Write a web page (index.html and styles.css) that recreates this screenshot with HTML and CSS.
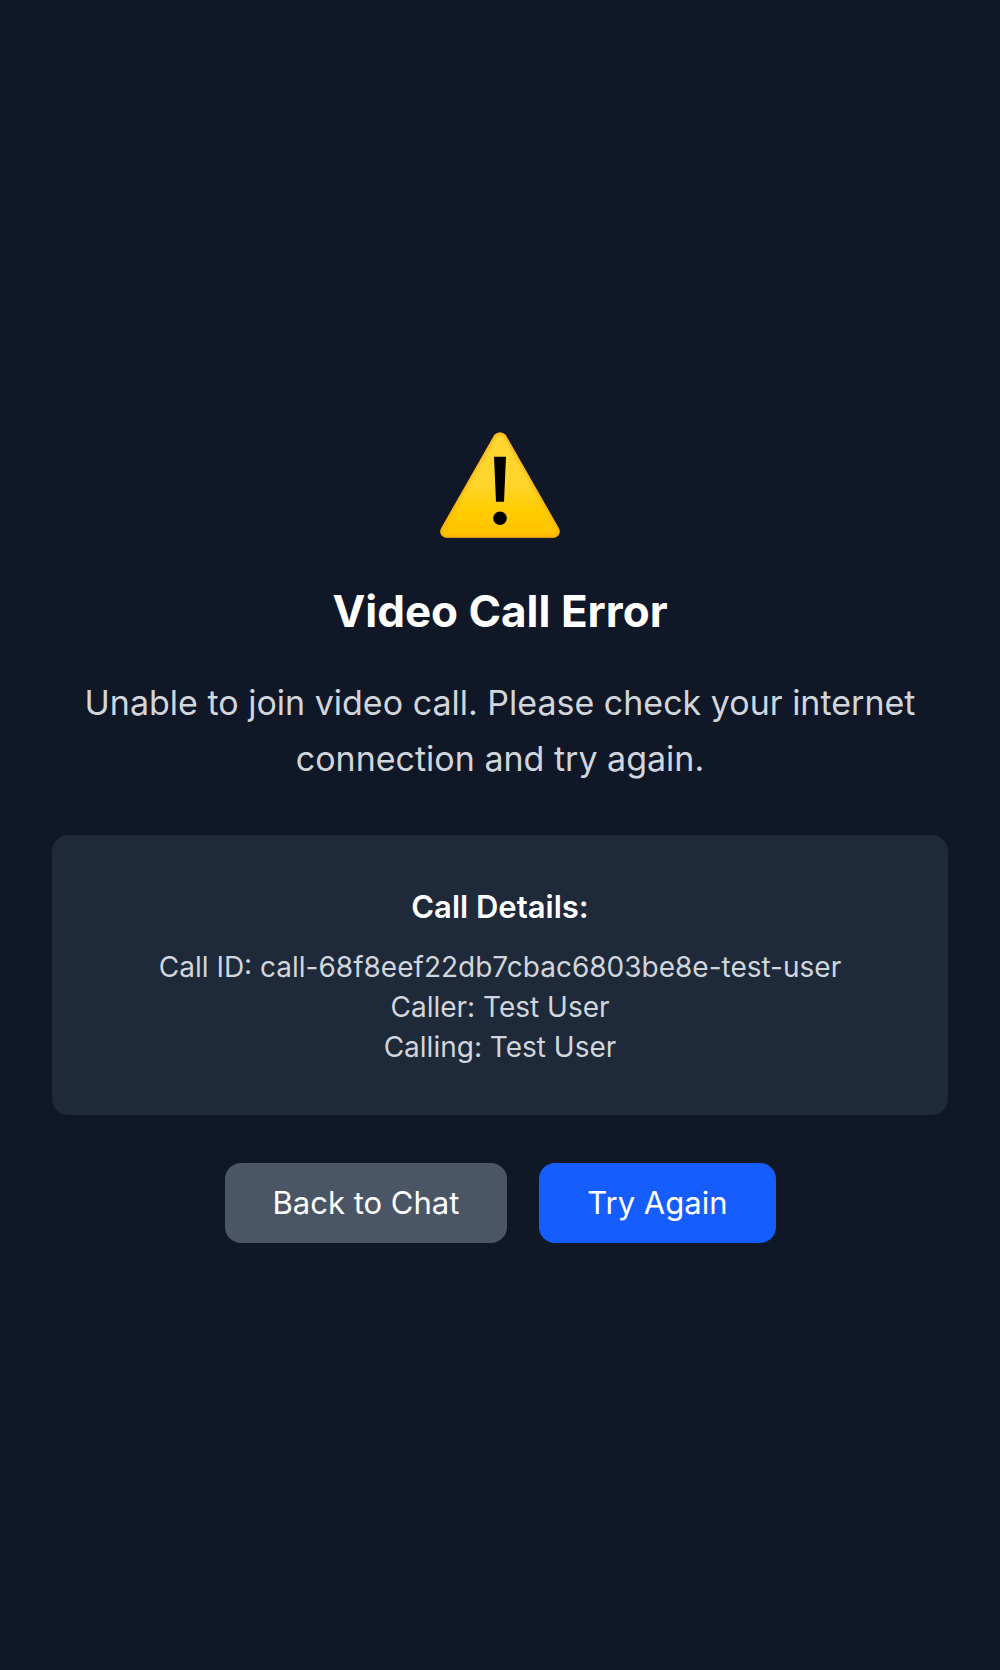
FILE: index.html
```html
<!DOCTYPE html>
<html lang="en">
<head>
<meta charset="utf-8">
<meta name="viewport" content="width=device-width, initial-scale=1">
<title>Video Call Error</title>
<link rel="stylesheet" href="styles.css">
</head>
<body>
<main class="error-page">
  <svg class="warning-icon" viewBox="0 0 120 120" role="img" aria-label="Warning">
    <defs>
      <linearGradient id="sign" x1="0" y1="0" x2="0" y2="1">
        <stop offset="0" stop-color="#ffd633"/>
        <stop offset="0.5" stop-color="#ffd52b"/>
        <stop offset="0.75" stop-color="#ffcc00"/>
        <stop offset="1" stop-color="#ffc200"/>
      </linearGradient>
      <clipPath id="edge">
        <path id="shape" d="M53.6 9.2C56.4 4.3 63.6 4.3 66.4 9.2L118.7 101C121.3 105.6 118.4 110.7 113.3 110.7H6.7C1.6 110.7-1.3 105.6 1.3 101Z"/>
      </clipPath>
      <filter id="soften"><feGaussianBlur stdDeviation="1.3"/></filter>
    </defs>
    <use href="#shape" fill="url(#sign)"/>
    <g clip-path="url(#edge)">
      <use href="#shape" fill="none" stroke="#f9a010" stroke-width="4" opacity="0.6" filter="url(#soften)"/>
    </g>
    <path d="M54 29.7H66L64 74.7H56Z"/>
    <circle cx="60" cy="91.3" r="6.8"/>
  </svg>
  <h1 class="title">Video Call Error</h1>
  <p class="message">Unable to join video call. Please check your internet connection and try again.</p>
  <section class="details">
    <h2 class="details-title">Call Details:</h2>
    <p class="details-line">Call ID: call-68f8eef22db7cbac6803be8e-test-user</p>
    <p class="details-line">Caller: Test User</p>
    <p class="details-line">Calling: Test User</p>
  </section>
  <div class="actions">
    <button class="button button-back" type="button">Back to Chat</button>
    <button class="button button-retry" type="button">Try Again</button>
  </div>
</main>
</body>
</html>
```
FILE: styles.css
```css
* {
  box-sizing: border-box;
  margin: 0;
}

body {
  background: #101726;
  color: #fff;
  font-family: Inter, sans-serif;
  text-align: center;
}

.error-page {
  display: flex;
  flex-direction: column;
  align-items: center;
  justify-content: center;
  width: 100%;
  max-width: 1000px;
  min-height: 100vh;
  margin: 0 auto;
  padding: 16px 52px;
}

.warning-icon {
  width: 120px;
  height: 120px;
  margin-bottom: 32px;
}

.title {
  margin-bottom: 32px;
  font-size: 44px;
  font-weight: 700;
  line-height: 64px;
}

.message {
  margin-bottom: 48px;
  padding: 0 32px;
  color: #d1d5dc;
  font-size: 34px;
  line-height: 56px;
}

.details {
  width: 100%;
  margin-bottom: 48px;
  padding: 48px;
  border-radius: 16px;
  background: #1e2939;
}

.details-title {
  margin-bottom: 16px;
  font-size: 31px;
  font-weight: 600;
  line-height: 48px;
}

.details-line {
  color: #d1d5dc;
  font-size: 28px;
  line-height: 40px;
}

.actions {
  display: flex;
  gap: 32px;
}

.button {
  padding: 16px 48px;
  border: 0;
  border-radius: 16px;
  color: #fff;
  font: 400 31px/48px Inter, sans-serif;
}

.button-back {
  background: #4a5565;
}

.button-retry {
  background: #155dfc;
}
```
